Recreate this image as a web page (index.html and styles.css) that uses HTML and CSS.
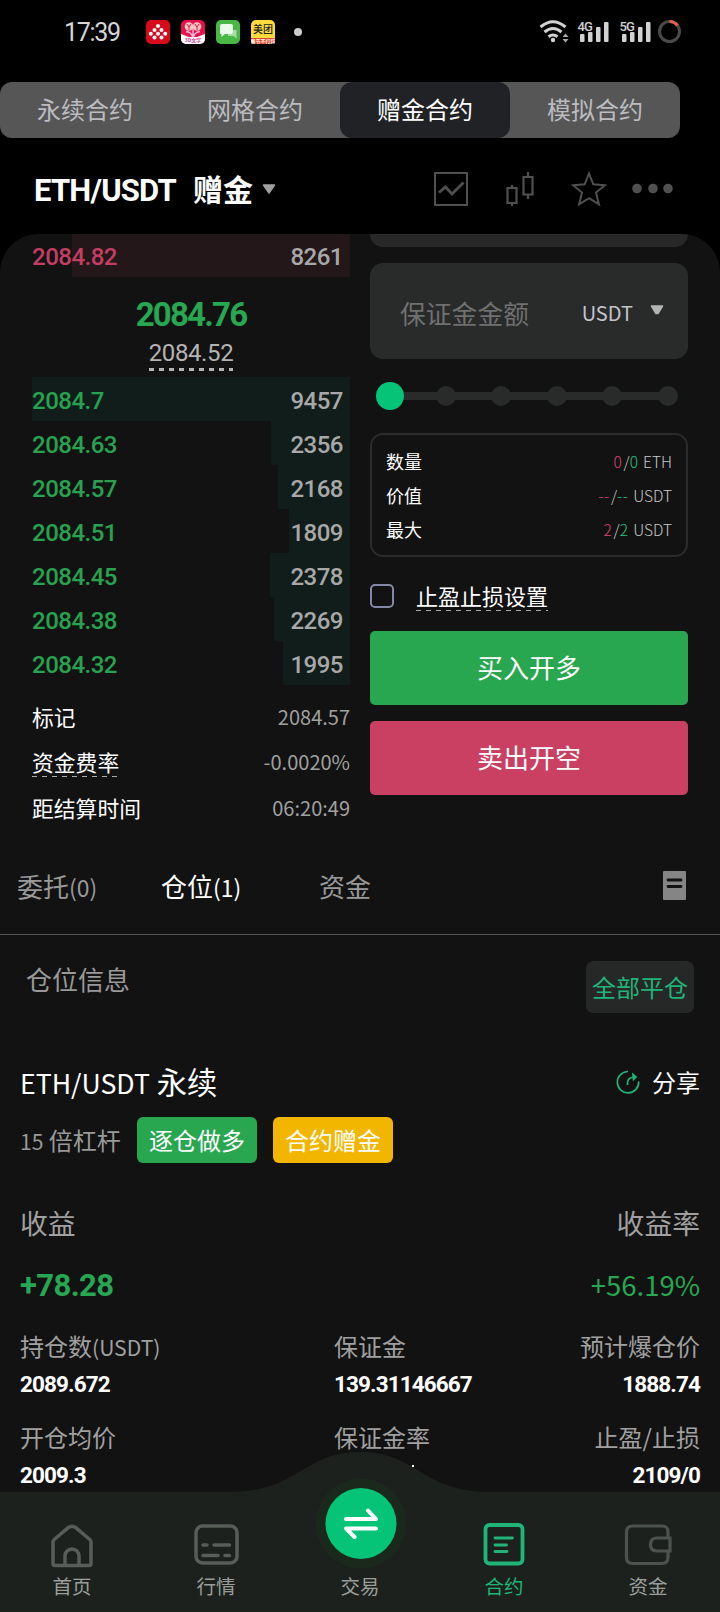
FILE: index.html
```html
<!DOCTYPE html>
<html lang="zh-CN">
<head>
    <meta charset="UTF-8">
    <meta name="viewport" content="width=device-width, initial-scale=1.0">
    <title>ETH/USDT 赠金合约</title>
    <link rel="stylesheet" href="styles.css">
</head>
<body>
    <div class="status-bar">
        <span class="clock">17:39</span>
        <div class="app-icons">
            <svg width="24" height="24" viewBox="0 0 24 24">
                <rect width="24" height="24" rx="5" fill="#d80b1c"/>
                <g fill="#fff">
                    <circle cx="12" cy="6" r="2"/><circle cx="8.5" cy="10" r="2"/><circle cx="15.5" cy="10" r="2"/>
                    <circle cx="4.8" cy="13.8" r="2"/><circle cx="12" cy="13.8" r="2"/><circle cx="19.2" cy="13.8" r="2"/>
                    <circle cx="8.5" cy="17.6" r="2"/><circle cx="15.5" cy="17.6" r="2"/>
                </g>
            </svg>
            <svg width="24" height="24" viewBox="0 0 24 24">
                <rect width="24" height="24" rx="5" fill="#e8114f"/>
                <path d="M0 14 L8 17 H16 L24 14 V19 a5 5 0 0 1 -5 5 H5 a5 5 0 0 1 -5 -5 Z" fill="#fff"/>
                <circle cx="8" cy="6.500" r="4.300" fill="#f9c7c0"/><circle cx="16" cy="6.500" r="4.300" fill="#f9c7c0"/>
                <path d="M6 4 l2 3 2-3 M8 7 v3 M14 4 l2 3 2-3 M16 7 v3" stroke="#e8114f" stroke-width="1" fill="none"/>
                <path d="M12 8 v9 M5 11.500 Q10 12 11.500 16.500 M19 11.500 Q14 12 12.500 16.500" stroke="#fbd" stroke-width="1.400" fill="none"/>
                <text x="12" y="22.300" text-anchor="middle" class="app-text" fill="#e23a8c">3D文字</text>
            </svg>
            <svg width="24" height="24" viewBox="0 0 24 24">
                <rect width="24" height="24" rx="5" fill="#49b844"/>
                <path d="M12 10 h8.500 v8.500 l-3 -2.500 h-5.500 z" fill="#a8dca4"/>
                <path d="M6 4 h9 a2 2 0 0 1 2 2 v6 a2 2 0 0 1 -2 2 h-6 l-3.500 3 v-3 a1.500 1.500 0 0 1 -1.500 -2 v-6 a2 2 0 0 1 2 -2z" fill="#ecfbea"/>
            </svg>
            <svg width="24" height="24" viewBox="0 0 24 24">
                <rect width="24" height="24" rx="5" fill="#fbdc3c"/>
                <path d="M0 18 H24 V19 a5 5 0 0 1 -5 5 H5 a5 5 0 0 1 -5 -5 Z" fill="#e8401f"/>
                <text x="12" y="13" text-anchor="middle" class="app-title">美团</text>
                <text x="12" y="22.500" text-anchor="middle" class="app-text" fill="#fff">春节不打烊</text>
            </svg>
        </div>
        <span class="status-dot"></span>
        <svg class="signals" width="146" height="28" viewBox="536 18 146 28">
            <g fill="none" stroke="#d2d2d2" stroke-width="3">
                <path d="M540.500 27 Q553 16.500 565.500 27"/>
                <path d="M544.500 32 Q553 25 561.500 32"/>
                <path d="M548.500 36.700 Q553 33.300 557.500 36.700"/>
            </g>
            <circle cx="553" cy="40" r="2.200" fill="#d2d2d2"/>
            <path d="M562.500 37 l3-3.500 3 3.500z M562.500 39 l3 3.500 3-3.500z" fill="#aaa"/>
            <g fill="#d2d2d2">
                <text x="577.500" y="30.500" class="net">4G</text>
                <rect x="580" y="34" width="4.500" height="8" rx="1"/><rect x="588" y="32" width="4.500" height="10" rx="1"/>
                <rect x="596" y="27" width="4.500" height="15" rx="1"/><rect x="604" y="22" width="4.500" height="20" rx="1"/>
                <text x="619.500" y="30.500" class="net">5G</text>
                <rect x="622" y="34" width="4.500" height="8" rx="1"/><rect x="630" y="32" width="4.500" height="10" rx="1"/>
                <rect x="638" y="27" width="4.500" height="15" rx="1"/><rect x="646" y="22" width="4.500" height="20" rx="1"/>
            </g>
            <circle cx="669.500" cy="31.500" r="10" fill="none" stroke="#4a4a4a" stroke-width="3"/>
            <path d="M669.500 21.500 A10 10 0 0 1 677.500 25.500" fill="none" stroke="#e8604c" stroke-width="3"/>
        </svg>
    </div>

    <div class="mode-tabs">
        <div class="mode">永续合约</div>
        <div class="mode">网格合约</div>
        <div class="mode active">赠金合约</div>
        <div class="mode">模拟合约</div>
    </div>

    <div class="pair-bar">
        <span class="pair">ETH/USDT</span>
        <span class="pair-type">赠金</span>
        <svg class="pair-caret" width="14" height="10" viewBox="0 0 14 10"><path d="M1.500 1 H12.500 L7 9 Z" fill="#a0a0a0" stroke="#a0a0a0" stroke-width="1.500" stroke-linejoin="round"/></svg>
        <svg class="pair-tools" width="242" height="40" viewBox="432 168 242 40" fill="none" stroke="#505050" stroke-width="2">
            <rect x="436" y="173" width="32" height="32"/>
            <path d="M440 192.500 L446.500 187 L453 194 L464.500 182.500" stroke-width="2.800"/>
            <path d="M508.500 188 h9 v15 h-9z M513 185 v3 M513 203 v3 M524.500 177 h9 v17.500 h-9z M529 172 v5 M529 194.500 v4.500" stroke-width="2.200"/>
            <path d="M590 173.500 L594.300 184.300 L605.800 185.200 L597 192.600 L599.900 204.300 L590 198.200 L580.100 204.300 L583 192.600 L574.200 185.200 L585.700 184.300 Z"/>
            <g fill="#505050" stroke="none"><circle cx="638" cy="188.500" r="4.800"/><circle cx="654" cy="188.500" r="4.800"/><circle cx="669" cy="188.500" r="4.800"/></g>
        </svg>
    </div>

    <div class="panel">
        <div class="trade">
            <div class="book">
                <div class="level ask"><i class="depth" style="width: 278px"></i><span>2084.82</span><b>8261</b></div>
                <div class="last">
                    <div class="last-price">2084.76</div>
                    <div class="index-price">2084.52</div>
                </div>
                <div class="level bid"><i class="depth" style="width: 318px"></i><span>2084.7</span><b>9457</b></div>
                <div class="level bid"><i class="depth" style="width: 79px"></i><span>2084.63</span><b>2356</b></div>
                <div class="level bid"><i class="depth" style="width: 72px"></i><span>2084.57</span><b>2168</b></div>
                <div class="level bid"><i class="depth" style="width: 61px"></i><span>2084.51</span><b>1809</b></div>
                <div class="level bid"><i class="depth" style="width: 80px"></i><span>2084.45</span><b>2378</b></div>
                <div class="level bid"><i class="depth" style="width: 76px"></i><span>2084.38</span><b>2269</b></div>
                <div class="level bid"><i class="depth" style="width: 67px"></i><span>2084.32</span><b>1995</b></div>
                <div class="meta">
                    <div class="meta-row"><span>标记</span><em>2084.57</em></div>
                    <div class="meta-row"><span class="dashed">资金费率</span><em>-0.0020%</em></div>
                    <div class="meta-row"><span>距结算时间</span><em>06:20:49</em></div>
                </div>
            </div>

            <div class="order">
                <div class="field-end"></div>
                <div class="field">
                    <span class="placeholder">保证金金额</span>
                    <span class="unit">USDT</span>
                    <svg width="14" height="10" viewBox="0 0 14 10"><path d="M1.500 1 H12.500 L8 8.500 H6 Z" fill="#b4b4b4" stroke="#b4b4b4" stroke-width="1.500" stroke-linejoin="round"/></svg>
                </div>
                <div class="slider">
                    <i class="knob"></i><i></i><i></i><i></i><i></i><i></i>
                </div>
                <div class="limits">
                    <div class="limit"><span>数量</span><em><u class="down">0</u>/<u class="up">0</u> ETH</em></div>
                    <div class="limit"><span>价值</span><em><u class="down">--</u>/<u class="up">--</u> USDT</em></div>
                    <div class="limit"><span>最大</span><em><u class="down">2</u>/<u class="up">2</u> USDT</em></div>
                </div>
                <div class="tpsl">
                    <i class="checkbox"></i>
                    <span class="dashed">止盈止损设置</span>
                </div>
                <div class="btn buy">买入开多</div>
                <div class="btn sell">卖出开空</div>
            </div>
        </div>

        <div class="tabs">
            <span class="tab">委托<small>(0)</small></span>
            <span class="tab active">仓位<small>(1)</small></span>
            <span class="tab">资金</span>
            <svg class="history" width="23" height="29" viewBox="0 0 23 29">
                <rect width="23" height="29" rx="1" fill="#858585"/>
                <path d="M5 9 H18 M5 15.500 H18" stroke="#121212" stroke-width="2.800" stroke-linecap="round"/>
            </svg>
        </div>

        <div class="positions-head">
            <span>仓位信息</span>
            <div class="close-all">全部平仓</div>
        </div>

        <div class="position">
            <div class="position-title">
                <span class="name"><small>ETH/USDT</small> 永续</span>
                <svg width="24" height="24" viewBox="0 0 24 24" fill="none" stroke="#20b478" stroke-width="1.700">
                    <path d="M12 1.500 A10.700 10.700 0 1 0 22.700 11.500"/>
                    <path d="M11.500 15 V12.500 Q12 7 19.500 7"/>
                    <path d="M17 4.500 L20 7 L17.500 9.500 Z" fill="#20b478"/>
                </svg>
                <span class="share">分享</span>
            </div>
            <div class="badges">
                <span class="leverage"><small>15</small> 倍杠杆</span>
                <span class="badge long">逐仓做多</span>
                <span class="badge bonus">合约赠金</span>
            </div>
            <div class="pnl-label"><span>收益</span><span>收益率</span></div>
            <div class="pnl"><b>+78.28</b><span>+56.19%</span></div>
            <div class="stats">
                <div class="stat"><span>持仓数<small>(USDT)</small></span><b>2089.672</b></div>
                <div class="stat"><span>保证金</span><b>139.31146667</b></div>
                <div class="stat right"><span>预计爆仓价</span><b>1888.74</b></div>
                <div class="stat"><span>开仓均价</span><b>2009.3</b></div>
                <div class="stat"><span>保证金率</span><i class="speck"></i></div>
                <div class="stat right"><span>止盈/止损</span><b>2109/0</b></div>
            </div>
        </div>
    </div>

    <div class="nav">
        <svg class="nav-bg" width="720" height="160" viewBox="0 0 720 160">
            <path d="M0 40 H228 C300 40 302 0 360 0 C418 0 420 40 492 40 H720 V160 H0 Z" fill="#1c211d"/>
            <circle cx="361" cy="71.500" r="45" fill="#1b291d"/>
            <circle cx="361" cy="71.500" r="35.500" fill="#05c377"/>
            <path d="M346 67 H376 L368 58.500 M376 76.500 H346 L354.500 85" fill="none" stroke="#fff" stroke-width="4" stroke-linecap="round" stroke-linejoin="round"/>
        </svg>
        <div class="nav-items">
            <div class="nav-item">
                <svg width="46" height="46" viewBox="0 0 46 46" fill="none" stroke="#565e57" stroke-width="3.500">
                    <path d="M4 19 Q4 17.500 5.200 16.500 L19.500 4.500 Q23 2 26.500 4.500 L40.800 16.500 Q42 17.500 42 19 V40.500 Q42 42.500 40 42.500 H6 Q4 42.500 4 40.500 Z"/>
                    <path d="M16 42 V33 a7 7 0 0 1 14 0 V42"/>
                </svg>
                <span>首页</span>
            </div>
            <div class="nav-item">
                <svg width="46" height="46" viewBox="0 0 46 46" fill="none" stroke="#565e57" stroke-width="3.500">
                    <rect x="3" y="3" width="41" height="37" rx="6.500"/>
                    <path d="M10 22 h4 M21 22 h15.500 M10 32.500 h15 M32 32.500 h4.500" stroke-linecap="round"/>
                </svg>
                <span>行情</span>
            </div>
            <div class="nav-item">
                <div class="nav-space"></div>
                <span>交易</span>
            </div>
            <div class="nav-item active">
                <svg width="46" height="46" viewBox="0 0 46 46" fill="none" stroke="#20b478" stroke-width="3.800">
                    <rect x="4.500" y="2" width="37" height="38.500" rx="4"/>
                    <path d="M14 15 h17.500 M14 22 h11.500 M14 28.500 h12" stroke-width="2.800" stroke-linecap="round"/>
                </svg>
                <span>合约</span>
            </div>
            <div class="nav-item">
                <svg width="48" height="46" viewBox="0 0 48 46" fill="none" stroke="#4b534c" stroke-width="3.200">
                    <path d="M44 14 V9 Q44 3 38 3 H8.500 Q2.500 3 2.500 9 V34.500 Q2.500 40.500 8.500 40.500 H38 Q44 40.500 44 34.500 V29"/>
                    <path d="M46 15 H33 Q26.500 15 26.500 21.500 Q26.500 28 33 28 H46 Z"/>
                </svg>
                <span>资金</span>
            </div>
        </div>
    </div>
</body>
</html>
```

FILE: styles.css
```css
* {
    box-sizing: border-box;
}
body {
    margin: 0;
    width: 720px;
    height: 1612px;
    overflow: hidden;
    background-color: #000;
    color: #fff;
    font-family: "Noto Sans CJK SC", "Noto Sans", sans-serif;
    font-weight: 400;
    white-space: nowrap;
}
i, em {
    font-style: normal;
}
u {
    text-decoration: none;
}
svg {
    display: block;
    flex: none;
}
small {
    font-size: 0.88em;
    line-height: 1;
}

/* status bar */
.status-bar {
    display: flex;
    align-items: center;
    height: 64px;
    padding-left: 64px;
}
.clock {
    width: 82px;
    padding-top: 1px;
    font-family: Roboto, sans-serif;
    font-size: 25px;
    letter-spacing: -1.3px;
    color: #d6d6d6;
}
.app-icons {
    display: flex;
    gap: 11px;
}
.app-text {
    font-size: 5px;
    font-weight: 700;
}
.app-title {
    font-size: 10px;
    font-weight: 500;
    fill: #222;
}
.status-dot {
    width: 8px;
    height: 8px;
    margin-left: 19px;
    border-radius: 50%;
    background-color: #ccc;
}
.signals {
    margin-left: 234px;
}
.net {
    font-family: Roboto, sans-serif;
    font-size: 13px;
    font-weight: 500;
    letter-spacing: -0.8px;
}

/* contract type switch */
.mode-tabs {
    display: flex;
    width: 680px;
    height: 56px;
    margin-top: 18px;
    border-radius: 12px;
    background-color: #565656;
    overflow: hidden;
}
.mode {
    flex: 1;
    line-height: 54px;
    text-align: center;
    font-size: 24px;
    color: #bcbcc0;
}
.mode.active {
    border-radius: 12px;
    background-color: #212225;
    color: #fff;
}

/* pair header */
.pair-bar {
    display: flex;
    align-items: center;
    height: 96px;
    padding: 4px 0 0 34px;
}
.pair {
    width: 159px;
    padding-top: 4px;
    font-family: Roboto, sans-serif;
    font-size: 31px;
    font-weight: 700;
    letter-spacing: -0.8px;
}
.pair-type {
    width: 69px;
    font-size: 30px;
    font-weight: 700;
    line-height: 40px;
}
.pair-caret {
    margin-top: 2px;
}
.pair-tools {
    margin-left: 155px;
}

.panel {
    height: 1378px;
    border-radius: 38px 38px 0 0;
    background-color: #121212;
    overflow: hidden;
}
.trade {
    display: flex;
    gap: 20px;
    height: 608px;
    padding: 0 32px;
}

/* order book */
.book {
    width: 318px;
    margin-top: -1px;
}
.level {
    position: relative;
    display: flex;
    justify-content: space-between;
    height: 44px;
    padding-right: 7px;
    line-height: 49px;
    font-family: Roboto, sans-serif;
    font-size: 24px;
    font-weight: 500;
    letter-spacing: -0.5px;
}
.level span, .level b {
    position: relative;
    font-weight: inherit;
}
.level b {
    color: #a8a8a8;
}
.depth {
    position: absolute;
    top: 0;
    right: 0;
    height: 44px;
}
.ask {
    color: #c43e63;
}
.ask .depth {
    background-color: #241719;
}
.bid {
    color: #28a250;
}
.bid .depth {
    background-color: #111d1a;
}
.last {
    display: flex;
    flex-direction: column;
    align-items: center;
    height: 100px;
    padding-top: 18px;
    font-family: Roboto, sans-serif;
}
.last-price {
    line-height: 40px;
    font-size: 33px;
    font-weight: 700;
    letter-spacing: -1.8px;
    color: #28a753;
}
.index-price {
    height: 36px;
    line-height: 36px;
    font-size: 24px;
    letter-spacing: -0.4px;
    color: #b4b4b4;
    background: repeating-linear-gradient(90deg, #b4b4b4 0 5px, transparent 5px 10px) 0 100% / 100% 3px no-repeat;
}
.meta {
    padding-top: 9px;
}
.meta-row {
    display: flex;
    justify-content: space-between;
    align-items: center;
    height: 45.5px;
    font-size: 21.8px;
    line-height: 30px;
}
.meta-row em {
    font-size: 20px;
    color: #a0a0a0;
}
.dashed {
    background: repeating-linear-gradient(90deg, #aaa 0 5px, transparent 5px 10px) 0 100% / 100% 1px no-repeat;
}

/* order form */
.order {
    width: 318px;
}
.field-end {
    height: 13px;
    margin-bottom: 16px;
    border-radius: 0 0 13px 13px;
    background-color: #282828;
}
.field {
    display: flex;
    align-items: center;
    height: 96px;
    padding: 2px 24px 0 30px;
    border-radius: 13px;
    background-color: #292a2a;
}
.placeholder {
    flex: 1;
    font-size: 25.8px;
    color: #707070;
}
.unit {
    margin-right: 17px;
    font-size: 20px;
    color: #c4c4cc;
}
.field svg {
    margin-bottom: 4px;
}
.slider {
    display: flex;
    justify-content: space-between;
    align-items: center;
    height: 74px;
    padding: 0 10px 0 6px;
    background: linear-gradient(#292a2a, #292a2a) 20px 50% / 280px 8px no-repeat;
}
.slider i {
    width: 20px;
    height: 20px;
    border-radius: 50%;
    background-color: #292a2a;
}
.slider .knob {
    width: 28px;
    height: 28px;
    margin-right: -4px;
    background-color: #05c377;
}
.limits {
    height: 124px;
    padding: 9px 14px;
    border: 2px solid #2a2b2b;
    border-radius: 13px;
}
.limit {
    display: flex;
    justify-content: space-between;
    height: 34px;
    line-height: 34px;
    font-size: 18px;
}
.limit em {
    font-size: 15.5px;
    font-weight: 300;
    color: #c8c8c8;
}
.limit u {
    margin-right: 1px;
    letter-spacing: 0.7px;
}
.down {
    color: #dc4470;
}
.up {
    color: #20c482;
}
.tpsl {
    display: flex;
    align-items: center;
    gap: 22px;
    height: 74px;
    padding-top: 4px;
    font-size: 22px;
    line-height: 28px;
}
.tpsl .dashed {
    padding-bottom: 2px;
}
.checkbox {
    width: 24px;
    height: 24px;
    border: 2px solid #8487a8;
    border-radius: 5px;
}
.btn {
    height: 74px;
    line-height: 72px;
    border-radius: 5px;
    text-align: center;
    font-size: 26px;
}
.buy {
    background-color: #28a650;
}
.sell {
    margin-top: 16px;
    background-color: #c94063;
}

/* tabs */
.tabs {
    display: flex;
    align-items: center;
    height: 93px;
    padding: 0 0 5px 17px;
    border-bottom: 1px solid #555;
    font-size: 26px;
}
.tab {
    width: 144px;
    color: #999;
}
.tab.active {
    width: 158px;
    color: #fff;
}
.history {
    margin-left: 200px;
}

/* positions */
.positions-head {
    display: flex;
    justify-content: space-between;
    padding: 26px 26px 0;
    line-height: 35px;
    font-size: 26px;
    color: #999;
}
.close-all {
    width: 108px;
    height: 52px;
    line-height: 51px;
    border-radius: 7px;
    background-color: #262727;
    text-align: center;
    font-size: 24px;
    color: #20b478;
}
.position {
    padding: 40px 20px 0;
}
.position-title {
    display: flex;
    align-items: center;
    height: 60px;
    padding-bottom: 2px;
}
.name {
    flex: 1;
    padding-bottom: 3px;
    font-size: 30.3px;
}
.share {
    margin-left: 12px;
    padding-bottom: 1px;
    font-size: 24px;
}
.badges {
    display: flex;
    align-items: center;
    height: 46px;
    margin-top: 4px;
    font-size: 24px;
}
.leverage {
    width: 117px;
    padding-bottom: 2px;
    color: #999;
}
.badge {
    width: 120px;
    height: 46px;
    margin-right: 16px;
    line-height: 45px;
    border-radius: 6px;
    text-align: center;
}
.long {
    background-color: #28a650;
}
.bonus {
    background-color: #f2b600;
}
.pnl-label {
    display: flex;
    justify-content: space-between;
    margin-top: 40px;
    line-height: 38px;
    font-size: 27.8px;
    color: #a0a0a0;
}
.pnl {
    display: flex;
    justify-content: space-between;
    align-items: center;
    height: 42px;
    margin-top: 23px;
    font-size: 27.5px;
    color: #28a753;
}
.pnl b {
    font-family: Roboto, sans-serif;
    font-size: 31px;
    letter-spacing: -0.6px;
}
.pnl span {
    padding-bottom: 3px;
}
.stats {
    display: grid;
    grid-template-columns: 314px 1fr auto;
    row-gap: 20px;
    margin-top: 23px;
}
.stat {
    height: 71px;
}
.stat span {
    display: block;
    height: 33px;
    line-height: 33px;
    font-size: 24px;
    color: #a0a0a0;
}
.stat b {
    display: block;
    margin-top: 5px;
    line-height: 34px;
    font-family: Roboto, sans-serif;
    font-size: 22.5px;
    letter-spacing: -0.9px;
}
.right {
    text-align: right;
}
.speck {
    display: block;
    width: 2px;
    height: 2px;
    margin: 12px 0 0 78px;
    background-color: #fff;
}

/* bottom navigation */
.nav {
    position: absolute;
    left: 0;
    top: 1452px;
    width: 720px;
    height: 160px;
}
.nav-bg {
    position: absolute;
    left: 0;
    top: 0;
}
.nav-items {
    position: relative;
    display: flex;
    padding-top: 71px;
}
.nav-item {
    flex: 1;
    display: flex;
    flex-direction: column;
    align-items: center;
    font-size: 19.5px;
    line-height: 32px;
    color: #9a9e9a;
}
.nav-item.active {
    color: #20b478;
}
.nav-item span {
    margin-top: 1px;
}
.nav-space {
    height: 46px;
}
```
